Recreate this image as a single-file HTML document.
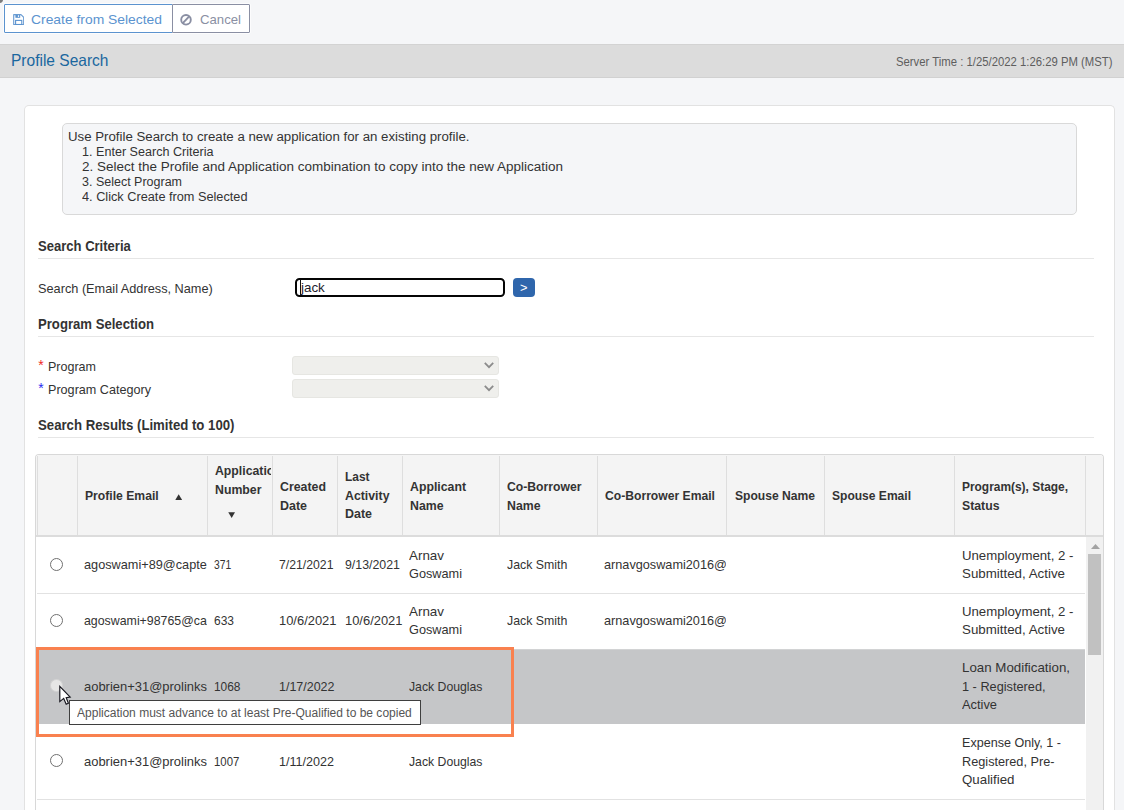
<!DOCTYPE html>
<html>
<head>
<meta charset="utf-8">
<title>Profile Search</title>
<style>
html,body{margin:0;padding:0;font-family:"Liberation Sans",sans-serif}
html{width:1124px;height:810px;overflow:hidden}
body{width:1124px;height:810px;overflow:hidden;position:relative;background:#f5f6f8;font-family:"Liberation Sans",sans-serif}
.a{position:absolute;box-sizing:border-box}
.t{position:absolute;white-space:nowrap;line-height:20px;height:20px;transform-origin:0 50%}
.c{position:absolute;height:20px;overflow:hidden}
.vl{position:absolute;width:1px;background:#dedede;top:456px;height:79px}
.hl{position:absolute;left:37px;width:1048px;height:1px;background:#e2e2e2}
.sl{position:absolute;left:38px;width:1056px;height:1px;background:#e6e6e6}
</style>
</head>
<body>
<!-- corner artifact -->
<div class="a" style="left:-4px;top:-4px;width:7px;height:7px;border-radius:50%;background:#7c7c7c"></div>

<!-- buttons -->
<div class="a" style="left:4px;top:4px;width:169px;height:29px;background:#fff;border:1px solid #5b93cf;border-radius:1px 0 0 1px;box-shadow:0 0 0 1px rgba(255,255,255,.7)"></div>
<div class="a" style="left:172px;top:4px;width:78px;height:29px;background:#fff;border:1px solid #8a8fa3;border-radius:0 1px 1px 0;box-shadow:1px 0 0 0 rgba(255,255,255,.7),0 1px 0 0 rgba(255,255,255,.7),0 -1px 0 0 rgba(255,255,255,.7)"></div>
<!-- save icon -->
<svg class="a" style="left:13px;top:13.8px" width="11.4" height="11.2" viewBox="0 0 11.4 11.2">
  <path d="M0.7 0.7 H8.0 L10.7 3.3 V10.5 H0.7 Z" fill="none" stroke="#6b9dd3" stroke-width="1.15" stroke-linejoin="round"/>
  <rect x="2.4" y="0.9" width="4.8" height="2.9" fill="#5b93cf"/>
  <rect x="4.9" y="1.3" width="1.2" height="1.6" fill="#fff"/>
  <rect x="2.6" y="6.4" width="6.2" height="4.1" fill="none" stroke="#5b93cf" stroke-width="1.1"/>
</svg>
<!-- cancel icon -->
<svg class="a" style="left:180.2px;top:13.6px" width="12" height="12" viewBox="0 0 12 12">
  <circle cx="6" cy="5.8" r="4.8" fill="none" stroke="#8a8fa3" stroke-width="1.9"/>
  <path d="M9.2 2.4 L2.8 9.2" stroke="#8a8fa3" stroke-width="1.9"/>
</svg>

<!-- title bar -->
<div class="a" style="left:0;top:44px;width:1124px;height:34px;background:#dcdcdc;border-top:1px solid #d3d3d3;border-bottom:1px solid #d1d1d1"></div>

<!-- main panel -->
<div class="a" style="left:24px;top:105px;width:1091px;height:705px;background:#fff;border:1px solid #e2e2e2;border-bottom:0;border-radius:5px 5px 0 0"></div>
<!-- info box -->
<div class="a" style="left:62px;top:123px;width:1015px;height:92px;background:#f5f6f8;border:1px solid #d9d9d9;border-radius:5px"></div>

<!-- section lines -->
<div class="sl" style="top:258px"></div>
<div class="sl" style="top:336px"></div>
<div class="sl" style="top:437px"></div>

<!-- search input -->
<div class="a" style="left:295px;top:278px;width:210px;height:19px;background:#fff;border:2px solid #050505;border-radius:4.5px"></div>
<div class="a" style="left:300px;top:280px;width:1px;height:15px;background:#111"></div>
<div class="a" style="left:513px;top:278px;width:22px;height:19px;background:#2f66ac;border-radius:4px"></div>

<!-- selects -->
<div class="a" style="left:292px;top:356px;width:207px;height:19px;background:#efefec;border:1px solid #e6e6e2;border-radius:3px"></div>
<div class="a" style="left:292px;top:379px;width:207px;height:19px;background:#efefec;border:1px solid #e6e6e2;border-radius:3px"></div>
<svg class="a" style="left:484px;top:362px" width="10" height="7" viewBox="0 0 10 7"><path d="M0.8 0.9 L5 5.2 L9.2 0.9" fill="none" stroke="#8c8c8c" stroke-width="1.8"/></svg>
<svg class="a" style="left:484px;top:385px" width="10" height="7" viewBox="0 0 10 7"><path d="M0.8 0.9 L5 5.2 L9.2 0.9" fill="none" stroke="#8c8c8c" stroke-width="1.8"/></svg>

<!-- table -->
<div class="a" style="left:35px;top:454px;width:1069px;height:356px;background:#fff;border:1px solid #d8d8d8;border-bottom:0;border-radius:4px 4px 0 0"></div>
<!-- header -->
<div class="a" style="left:36px;top:455px;width:1067px;height:80px;background:#f4f4f4;border-radius:3px 3px 0 0"></div><div class="vl" style="left:37px"></div>
<div class="a" style="left:36px;top:535px;width:1067px;height:2px;background:#dcdcdc"></div>
<div class="vl" style="left:77px"></div>
<div class="vl" style="left:207px"></div>
<div class="vl" style="left:272px"></div>
<div class="vl" style="left:337px"></div>
<div class="vl" style="left:402px"></div>
<div class="vl" style="left:499px"></div>
<div class="vl" style="left:597px"></div>
<div class="vl" style="left:726px"></div>
<div class="vl" style="left:824px"></div>
<div class="vl" style="left:954px"></div>
<div class="vl" style="left:1085px"></div>
<!-- sort arrows -->
<svg class="a" style="left:174.7px;top:494.2px" width="7.4" height="6.2" viewBox="0 0 8 7" preserveAspectRatio="none"><path d="M4 0.3 L7.7 6.7 H0.3 Z" fill="#333"/></svg>
<svg class="a" style="left:227.9px;top:511.9px" width="7.3" height="6.2" viewBox="0 0 8 7" preserveAspectRatio="none"><path d="M0.3 0.3 H7.7 L4 6.7 Z" fill="#333"/></svg>

<!-- scrollbar -->
<div class="a" style="left:1086px;top:537px;width:17px;height:273px;background:#f1f1f1"></div>
<div class="a" style="left:1088px;top:554px;width:13px;height:101px;background:#c1c1c1"></div>
<svg class="a" style="left:1090.5px;top:543.5px" width="9" height="5" viewBox="0 0 9 5"><path d="M4.5 0 L9 5 H0 Z" fill="#a3a3a3"/></svg>

<!-- rows -->
<div class="hl" style="top:593px"></div>
<div class="a" style="left:37px;top:649px;width:1048px;height:75px;background:#c5c6c8;border-top:1px solid #d2d3d4"></div>
<div class="hl" style="top:799px"></div>

<!-- radios -->
<div class="a" style="left:50px;top:558px;width:13px;height:13px;border-radius:50%;border:1.25px solid #707070;background:#fff"></div>
<div class="a" style="left:50px;top:614px;width:13px;height:13px;border-radius:50%;border:1.25px solid #707070;background:#fff"></div>
<div class="a" style="left:50px;top:679px;width:12.5px;height:12.5px;border-radius:50%;border:1px solid #d2d2d2;background:#e6e6e6"></div>
<div class="a" style="left:50px;top:754px;width:13px;height:13px;border-radius:50%;border:1.25px solid #707070;background:#fff"></div>

<!-- orange highlight -->
<div class="a" style="left:36px;top:647px;width:478px;height:90px;border:3px solid #f9814f"></div>

<!-- tooltip -->
<div class="a" style="left:69px;top:700px;width:352px;height:25px;background:#fff;border:1px solid #3f3f3f"></div>

<span class="t" style="left:31.4px;top:9px;font-size:13.5px;line-height:21px;height:21px;color:#5b93cf;transform:scaleX(1.0269);">Create from Selected</span>
<span class="t" style="left:199.8px;top:9px;font-size:13.5px;line-height:21px;height:21px;color:#8a8fa3;transform:scaleX(0.9755);">Cancel</span>
<span class="t" style="left:11.2px;top:48px;font-size:16.5px;line-height:24px;height:24px;color:#1a679f;transform:scaleX(0.9408);">Profile Search</span>
<span class="t" style="left:896.4px;top:52px;font-size:12px;line-height:20px;height:20px;color:#5e5e5e;transform:scaleX(0.9436);">Server Time : 1/25/2022 1:26:29 PM (MST)</span>
<span class="t" style="left:67.8px;top:127px;font-size:12.5px;line-height:20px;height:20px;color:#333;transform:scaleX(1.0602);">Use Profile Search to create a new application for an existing profile.</span>
<span class="t" style="left:82.3px;top:142px;font-size:12.5px;line-height:20px;height:20px;color:#333;transform:scaleX(1.0068);">1. Enter Search Criteria</span>
<span class="t" style="left:82.3px;top:157px;font-size:12.5px;line-height:20px;height:20px;color:#333;transform:scaleX(1.0782);">2. Select the Profile and Application combination to copy into the new Application</span>
<span class="t" style="left:82.3px;top:172px;font-size:12.5px;line-height:20px;height:20px;color:#333;transform:scaleX(0.9995);">3. Select Program</span>
<span class="t" style="left:82.3px;top:187px;font-size:12.5px;line-height:20px;height:20px;color:#333;transform:scaleX(1.0181);">4. Click Create from Selected</span>
<span class="t" style="left:38.3px;top:235px;font-size:14px;line-height:22px;height:22px;color:#333;font-weight:700;transform:scaleX(0.9316);">Search Criteria</span>
<span class="t" style="left:38.3px;top:313px;font-size:14px;line-height:22px;height:22px;color:#333;font-weight:700;transform:scaleX(0.9377);">Program Selection</span>
<span class="t" style="left:38.3px;top:414px;font-size:14px;line-height:22px;height:22px;color:#333;font-weight:700;transform:scaleX(0.9424);">Search Results (Limited to 100)</span>
<span class="t" style="left:38.3px;top:278px;font-size:13px;line-height:21px;height:21px;color:#333;transform:scaleX(0.9795);">Search (Email Address, Name)</span>
<span class="t" style="left:38.3px;top:354px;font-size:14px;line-height:22px;height:22px;color:#f0281f;">*</span>
<span class="t" style="left:47.6px;top:356px;font-size:13px;line-height:21px;height:21px;color:#333;transform:scaleX(0.9627);">Program</span>
<span class="t" style="left:38.3px;top:377px;font-size:14px;line-height:22px;height:22px;color:#2b2bf0;">*</span>
<span class="t" style="left:47.6px;top:379px;font-size:13px;line-height:21px;height:21px;color:#333;transform:scaleX(0.9697);">Program Category</span>
<span class="t" style="left:300.6px;top:277px;font-size:13.5px;line-height:21px;height:21px;color:#1c1c2c;transform:scaleX(0.991);">jack</span>
<span class="t" style="left:520.0px;top:277px;font-size:13px;line-height:21px;height:21px;color:#fff;transform:scaleX(0.9877);">&gt;</span>
<span class="t" style="left:85.2px;top:485px;font-size:13px;line-height:21px;height:21px;color:#333;font-weight:700;transform:scaleX(0.9359);">Profile Email</span>
<div class="c" style="left:215.1px;top:460px;width:55.8px;height:21px"><span class="t" style="left:0;top:0;font-size:13px;line-height:21px;height:21px;color:#333;font-weight:700;transform:scaleX(0.9434);">Application</span></div>
<span class="t" style="left:215.1px;top:479px;font-size:13px;line-height:21px;height:21px;color:#333;font-weight:700;transform:scaleX(0.9466);">Number</span>
<span class="t" style="left:280.0px;top:476px;font-size:13px;line-height:21px;height:21px;color:#333;font-weight:700;transform:scaleX(0.95);">Created</span>
<span class="t" style="left:280.0px;top:495px;font-size:13px;line-height:21px;height:21px;color:#333;font-weight:700;transform:scaleX(0.9579);">Date</span>
<span class="t" style="left:345.0px;top:466px;font-size:13px;line-height:21px;height:21px;color:#333;font-weight:700;transform:scaleX(0.9164);">Last</span>
<span class="t" style="left:345.0px;top:485px;font-size:13px;line-height:21px;height:21px;color:#333;font-weight:700;transform:scaleX(0.9474);">Activity</span>
<span class="t" style="left:345.0px;top:503px;font-size:13px;line-height:21px;height:21px;color:#333;font-weight:700;transform:scaleX(0.9579);">Date</span>
<span class="t" style="left:410.0px;top:476px;font-size:13px;line-height:21px;height:21px;color:#333;font-weight:700;transform:scaleX(0.9454);">Applicant</span>
<span class="t" style="left:410.0px;top:495px;font-size:13px;line-height:21px;height:21px;color:#333;font-weight:700;transform:scaleX(0.9457);">Name</span>
<span class="t" style="left:507.4px;top:476px;font-size:13px;line-height:21px;height:21px;color:#333;font-weight:700;transform:scaleX(0.9377);">Co-Borrower</span>
<span class="t" style="left:507.4px;top:495px;font-size:13px;line-height:21px;height:21px;color:#333;font-weight:700;transform:scaleX(0.9457);">Name</span>
<span class="t" style="left:605.0px;top:485px;font-size:13px;line-height:21px;height:21px;color:#333;font-weight:700;transform:scaleX(0.9342);">Co-Borrower Email</span>
<span class="t" style="left:734.5px;top:485px;font-size:13px;line-height:21px;height:21px;color:#333;font-weight:700;transform:scaleX(0.9304);">Spouse Name</span>
<span class="t" style="left:832.0px;top:485px;font-size:13px;line-height:21px;height:21px;color:#333;font-weight:700;transform:scaleX(0.9267);">Spouse Email</span>
<span class="t" style="left:962.0px;top:476px;font-size:13px;line-height:21px;height:21px;color:#333;font-weight:700;transform:scaleX(0.917);">Program(s), Stage,</span>
<span class="t" style="left:962.0px;top:495px;font-size:13px;line-height:21px;height:21px;color:#333;font-weight:700;transform:scaleX(0.9438);">Status</span>
<div class="c" style="left:84.4px;top:554px;width:122.8px;height:21px"><span class="t" style="left:0;top:0;font-size:13px;line-height:21px;height:21px;color:#333;transform:scaleX(0.9779);">agoswami+89@capterra.com</span></div>
<span class="t" style="left:214.1px;top:554px;font-size:13px;line-height:21px;height:21px;color:#333;transform:scaleX(0.7925);">371</span>
<span class="t" style="left:279.4px;top:554px;font-size:13px;line-height:21px;height:21px;color:#333;transform:scaleX(0.9422);">7/21/2021</span>
<span class="t" style="left:344.5px;top:554px;font-size:13px;line-height:21px;height:21px;color:#333;transform:scaleX(0.9508);">9/13/2021</span>
<span class="t" style="left:409.3px;top:545px;font-size:13px;line-height:21px;height:21px;color:#333;transform:scaleX(1.0304);">Arnav</span>
<span class="t" style="left:409.3px;top:563px;font-size:13px;line-height:21px;height:21px;color:#333;transform:scaleX(0.9781);">Goswami</span>
<span class="t" style="left:506.9px;top:554px;font-size:13px;line-height:21px;height:21px;color:#333;transform:scaleX(0.95);">Jack Smith</span>
<div class="c" style="left:604.3px;top:554px;width:122.2px;height:21px"><span class="t" style="left:0;top:0;font-size:13px;line-height:21px;height:21px;color:#333;transform:scaleX(0.9759);">arnavgoswami2016@gmail.com</span></div>
<span class="t" style="left:962.0px;top:545px;font-size:13px;line-height:21px;height:21px;color:#333;transform:scaleX(1.0152);">Unemployment, 2 -</span>
<span class="t" style="left:962.0px;top:563px;font-size:13px;line-height:21px;height:21px;color:#333;transform:scaleX(1.0254);">Submitted, Active</span>
<div class="c" style="left:84.4px;top:610px;width:122.8px;height:21px"><span class="t" style="left:0;top:0;font-size:13px;line-height:21px;height:21px;color:#333;transform:scaleX(0.9504);">agoswami+98765@capterra.com</span></div>
<span class="t" style="left:214.1px;top:610px;font-size:13px;line-height:21px;height:21px;color:#333;transform:scaleX(0.9215);">633</span>
<span class="t" style="left:279.4px;top:610px;font-size:13px;line-height:21px;height:21px;color:#333;transform:scaleX(0.9941);">10/6/2021</span>
<span class="t" style="left:344.5px;top:610px;font-size:13px;line-height:21px;height:21px;color:#333;transform:scaleX(0.9941);">10/6/2021</span>
<span class="t" style="left:409.3px;top:601px;font-size:13px;line-height:21px;height:21px;color:#333;transform:scaleX(1.0304);">Arnav</span>
<span class="t" style="left:409.3px;top:619px;font-size:13px;line-height:21px;height:21px;color:#333;transform:scaleX(0.9781);">Goswami</span>
<span class="t" style="left:506.9px;top:610px;font-size:13px;line-height:21px;height:21px;color:#333;transform:scaleX(0.95);">Jack Smith</span>
<div class="c" style="left:604.3px;top:610px;width:122.2px;height:21px"><span class="t" style="left:0;top:0;font-size:13px;line-height:21px;height:21px;color:#333;transform:scaleX(0.9759);">arnavgoswami2016@gmail.com</span></div>
<span class="t" style="left:962.0px;top:601px;font-size:13px;line-height:21px;height:21px;color:#333;transform:scaleX(1.0152);">Unemployment, 2 -</span>
<span class="t" style="left:962.0px;top:619px;font-size:13px;line-height:21px;height:21px;color:#333;transform:scaleX(1.0254);">Submitted, Active</span>
<div class="c" style="left:84.4px;top:676px;width:123.0px;height:21px"><span class="t" style="left:0;top:0;font-size:13px;line-height:21px;height:21px;color:#333;transform:scaleX(0.9966);">aobrien+31@prolinksolutions.com</span></div>
<span class="t" style="left:214.1px;top:676px;font-size:13px;line-height:21px;height:21px;color:#333;transform:scaleX(0.9163);">1068</span>
<span class="t" style="left:279.4px;top:676px;font-size:13px;line-height:21px;height:21px;color:#333;transform:scaleX(0.9595);">1/17/2022</span>
<span class="t" style="left:409.3px;top:676px;font-size:13px;line-height:21px;height:21px;color:#333;transform:scaleX(0.9417);">Jack Douglas</span>
<span class="t" style="left:962.0px;top:657px;font-size:13px;line-height:21px;height:21px;color:#333;transform:scaleX(1.0235);">Loan Modification,</span>
<span class="t" style="left:962.0px;top:676px;font-size:13px;line-height:21px;height:21px;color:#333;transform:scaleX(0.9793);">1 - Registered,</span>
<span class="t" style="left:962.0px;top:694px;font-size:13px;line-height:21px;height:21px;color:#333;transform:scaleX(0.9885);">Active</span>
<div class="c" style="left:84.4px;top:751px;width:123.0px;height:21px"><span class="t" style="left:0;top:0;font-size:13px;line-height:21px;height:21px;color:#333;transform:scaleX(0.9966);">aobrien+31@prolinksolutions.com</span></div>
<span class="t" style="left:214.1px;top:751px;font-size:13px;line-height:21px;height:21px;color:#333;transform:scaleX(0.8748);">1007</span>
<span class="t" style="left:279.4px;top:751px;font-size:13px;line-height:21px;height:21px;color:#333;transform:scaleX(0.967);">1/11/2022</span>
<span class="t" style="left:409.3px;top:751px;font-size:13px;line-height:21px;height:21px;color:#333;transform:scaleX(0.9417);">Jack Douglas</span>
<span class="t" style="left:962.0px;top:732px;font-size:13px;line-height:21px;height:21px;color:#333;transform:scaleX(0.967);">Expense Only, 1 -</span>
<span class="t" style="left:962.0px;top:751px;font-size:13px;line-height:21px;height:21px;color:#333;transform:scaleX(0.9772);">Registered, Pre-</span>
<span class="t" style="left:962.0px;top:769px;font-size:13px;line-height:21px;height:21px;color:#333;transform:scaleX(1.0231);">Qualified</span>
<span class="t" style="left:77.4px;top:703px;font-size:12px;line-height:20px;height:20px;color:#555;transform:scaleX(1.0018);">Application must advance to at least Pre-Qualified to be copied</span>

<!-- cursor -->
<svg class="a" style="left:58px;top:683.5px" width="16" height="23" viewBox="0 0 16 23">
  <path d="M1.8 2.3 L1.8 17.6 L5.7 14.4 L8.2 20.2 L10.4 19.2 L8.2 13.7 L12.2 13.0 Z" fill="#fff" stroke="#14141c" stroke-width="1.15" stroke-linejoin="miter"/>
</svg>
</body>
</html>
